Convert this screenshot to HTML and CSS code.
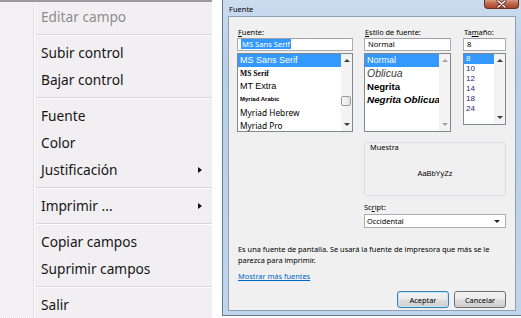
FILE: index.html
```html
<!DOCTYPE html>
<html lang="es">
<head>
    <meta charset="UTF-8">
    <meta name="viewport" content="width=device-width, initial-scale=1.0">
    <title>Fuente</title>
    <link rel="stylesheet" href="styles.css">
</head>
<body>
<div class="screen">
    <ul class="menu">
        <li class="disabled">Editar campo</li>
        <li class="sep"></li>
        <li>Subir control</li>
        <li>Bajar control</li>
        <li class="sep"></li>
        <li>Fuente</li>
        <li>Color</li>
        <li class="sub">Justificación</li>
        <li class="sep"></li>
        <li class="sub">Imprimir ...</li>
        <li class="sep"></li>
        <li>Copiar campos</li>
        <li>Suprimir campos</li>
        <li class="sep"></li>
        <li>Salir</li>
    </ul>

    <div class="dialog">
        <div class="titlebar">
            <span class="title">Fuente</span>
            <span class="close">
                <svg width="11" height="8" viewBox="0 0 11 8">
                    <path d="M2 1 L9 7 M9 1 L2 7" stroke="#5a2418" stroke-width="3" stroke-linecap="round"/>
                    <path d="M2 1 L9 7 M9 1 L2 7" stroke="#fff" stroke-width="1.6" stroke-linecap="round"/>
                </svg>
            </span>
        </div>

        <div class="panel">
            <div class="pickers">
                <div class="picker font">
                    <label><u>F</u>uente:</label>
                    <div class="field"><span class="sel">MS Sans Serif</span></div>
                    <div class="listbox">
                        <ul class="items">
                            <li class="on f-sans">MS Sans Serif</li>
                            <li class="f-serif">MS Serif</li>
                            <li class="f-sans">MT Extra</li>
                            <li class="f-arabic">Myriad Arabic</li>
                            <li class="f-myriad">Myriad Hebrew</li>
                            <li class="f-myriad">Myriad Pro</li>
                        </ul>
                        <div class="scroll">
                            <span class="arrow up"></span>
                            <span class="track"><span class="thumb"></span></span>
                            <span class="arrow down"></span>
                        </div>
                    </div>
                </div>

                <div class="picker style">
                    <label><u>E</u>stilo de fuente:</label>
                    <div class="field">Normal</div>
                    <div class="listbox">
                        <ul class="items">
                            <li class="on s-normal">Normal</li>
                            <li class="s-italic">Oblicua</li>
                            <li class="s-bold">Negrita</li>
                            <li class="s-bolditalic">Negrita Oblicua</li>
                        </ul>
                        <div class="scroll off">
                            <span class="arrow up"></span>
                            <span class="track"></span>
                            <span class="arrow down"></span>
                        </div>
                    </div>
                </div>

                <div class="picker size">
                    <label>Ta<u>m</u>año:</label>
                    <div class="field">8</div>
                    <div class="listbox">
                        <ul class="items">
                            <li class="on">8</li>
                            <li>10</li>
                            <li>12</li>
                            <li>14</li>
                            <li>18</li>
                            <li>24</li>
                        </ul>
                        <div class="scroll">
                            <span class="arrow up"></span>
                            <span class="track"></span>
                            <span class="arrow down"></span>
                        </div>
                    </div>
                </div>
            </div>

            <div class="extras">
                <div class="sample">
                    <span class="sample-label">Muestra</span>
                    <span class="sample-text">AaBbYyZz</span>
                </div>
                <label class="script-label">Sc<u>r</u>ipt:</label>
                <div class="combo">
                    <span>Occidental</span>
                    <span class="combo-arrow"></span>
                </div>
            </div>

            <p class="note">Es una fuente de pantalla. Se usará la fuente de impresora que más se le<br>parezca para imprimir.</p>
            <a class="more" href="#">Mostrar más fuentes</a>

            <div class="buttons">
                <button class="btn default">Aceptar</button>
                <button class="btn">Cancelar</button>
            </div>
        </div>
    </div>
</div>
</body>
</html>
```

FILE: styles.css
```css
* {
    box-sizing: border-box;
}
body {
    margin: 0;
    background: #fff;
}
.screen {
    display: flex;
    width: 521px;
    height: 318px;
    overflow: hidden;
}

/* menú contextual */
.menu {
    flex: none;
    width: 212px;
    height: 318px;
    margin: 0;
    padding: 1px 0 0;
    list-style: none;
    border-top: 2px solid #9b9b9b;
    background:
        linear-gradient(to right, transparent 33px, #e4e1e4 33px, #e4e1e4 34px, #fbfafb 34px, #fbfafb 35px, #f2eff2 35px),
        repeating-conic-gradient(#f9f8f9 0 25%, #ebe9eb 0 50%) 0 0 / 2px 2px;
    font: 13.7px "Noto Sans", sans-serif;
    color: #161616;
}
.menu li {
    display: flex;
    align-items: center;
    height: 27px;
    padding-left: 41px;
}
.menu .disabled {
    color: #8e8c8e;
}
.menu .sub::after {
    content: "";
    margin-left: auto;
    margin-right: 10px;
    border-left: 4px solid #111;
    border-top: 3.5px solid transparent;
    border-bottom: 3.5px solid transparent;
}
.menu .sep {
    display: block;
    height: 9px;
    margin-left: 36px;
    padding: 4px 0 0;
}
.menu .sep::before {
    content: "";
    display: block;
    border-top: 1px solid #d9d5d9;
    border-bottom: 1px solid #fdfdfd;
}

/* ventana de fuente */
.dialog {
    flex: none;
    display: flex;
    flex-direction: column;
    width: 300px;
    height: 316px;
    margin-left: 10px;
    padding: 0 5px 4px;
    border: 1px solid #667b93;
    border-top: 0;
    background: linear-gradient(#cadcef, #b9cfe7 60px, #c0d5eb);
    font: 7.4px "Noto Sans", sans-serif;
    color: #000;
}
.titlebar {
    display: flex;
    justify-content: space-between;
    height: 16px;
}
.title {
    padding: 4px 0 0 1px;
    font-size: 7.5px;
}
.close {
    display: flex;
    align-items: center;
    justify-content: center;
    width: 35px;
    height: 9px;
    margin-right: -3px;
    border: 1px solid #6a2c1e;
    border-top: 0;
    border-radius: 0 0 4px 4px;
    background: linear-gradient(#d99a84, #c0664a 45%, #a8452c);
}
.panel {
    flex: 1;
    padding: 9px 9px 0 8px;
    border: 1px solid #8da2b9;
    background: #f0f0f0;
}

.pickers {
    display: flex;
}
.picker label {
    display: block;
    height: 12px;
    padding-left: 1px;
    line-height: 12px;
}
.font {
    width: 116px;
}
.style {
    width: 87px;
    margin-left: 11px;
}
.size {
    width: 43px;
    margin-left: 12px;
}
.field {
    height: 13px;
    padding-left: 3px;
    border: 1px solid #abadb3;
    border-top-color: #9da0a8;
    background: #fff;
    font-size: 7.6px;
    line-height: 11px;
}
.field .sel {
    display: inline-block;
    padding: 0 1px;
    background: #3399ff;
    color: #fff;
    line-height: 10px;
}
.listbox {
    display: flex;
    height: 79px;
    margin-top: 2px;
    border: 1px solid #828790;
    background: #fff;
}
.size .listbox {
    height: 72px;
}
.items {
    flex: 1;
    min-width: 0;
    margin: 0;
    padding: 0;
    list-style: none;
    overflow: hidden;
}
.items li {
    height: 13px;
    padding-left: 2px;
    line-height: 13px;
    white-space: nowrap;
}
.items .on {
    background: #3399ff;
    color: #fff;
}
.f-sans {
    font: 9px "Liberation Sans", sans-serif;
}
.f-serif {
    font: bold 7.6px "Liberation Serif", serif;
}
.f-arabic {
    font: bold 6px "Liberation Sans", sans-serif;
}
.f-myriad {
    font: 8.3px "Noto Sans", sans-serif;
}
.s-normal {
    font: 9px "Liberation Sans", sans-serif;
}
.s-italic {
    font: italic 10.5px "Liberation Sans", sans-serif;
    color: #3a3a3a;
}
.s-bold {
    font: bold 9.6px "Liberation Sans", sans-serif;
}
.s-bolditalic {
    font: italic bold 9.9px "Liberation Sans", sans-serif;
}
.size .items li {
    height: 10px;
    font: 8px/10px "Liberation Sans", sans-serif;
    color: #1d2a72;
}
.size .items .on {
    color: #fff;
}

.scroll {
    flex: none;
    display: flex;
    flex-direction: column;
    width: 11px;
    background: #f3f3f3;
}
.arrow {
    display: flex;
    align-items: center;
    justify-content: center;
    height: 13px;
}
.arrow::before {
    content: "";
    border-left: 3px solid transparent;
    border-right: 3px solid transparent;
}
.arrow.up::before {
    border-bottom: 3px solid #3c3c3c;
}
.arrow.down::before {
    border-top: 3px solid #3c3c3c;
}
.scroll.off .arrow.up::before {
    border-bottom-color: #a3a3a3;
}
.scroll.off .arrow.down::before {
    border-top-color: #a3a3a3;
}
.track {
    flex: 1;
}
.thumb {
    display: block;
    width: 10px;
    height: 10px;
    margin: 29px 0 0 0;
    border: 1px solid #9a9a9a;
    border-radius: 2px;
    background: linear-gradient(to right, #f6f6f6, #e2e2e2);
}

.extras {
    width: 142px;
    margin-left: 127px;
}
.sample {
    display: flex;
    flex-direction: column;
    height: 54px;
    margin-top: 10px;
    padding: 1px 0 0 5px;
    border: 1px solid #dadee3;
    border-radius: 3px;
}
.sample-label {
    line-height: 7px;
}
.sample-text {
    flex: 1;
    display: flex;
    align-items: center;
    justify-content: center;
    padding-right: 5px;
    font: 7.4px "Liberation Sans", sans-serif;
}
.script-label {
    display: block;
    margin-top: 5px;
    line-height: 12px;
}
.combo {
    display: flex;
    align-items: center;
    justify-content: space-between;
    height: 14px;
    margin-top: 1px;
    padding: 0 5px 0 2px;
    border: 1px solid #abadb3;
    background: #fff;
}
.combo-arrow {
    border-top: 3px solid #222;
    border-left: 3px solid transparent;
    border-right: 3px solid transparent;
}

.note {
    margin: 16px 0 0 1px;
    line-height: 11px;
}
.more {
    display: inline-block;
    margin: 5px 0 0 1px;
    color: #0066cc;
    line-height: 11px;
}
.buttons {
    display: flex;
    justify-content: flex-end;
    gap: 5px;
    margin-top: 9px;
}
.btn {
    width: 52px;
    height: 17px;
    padding: 0;
    border: 1px solid #707070;
    border-radius: 3px;
    background: linear-gradient(#f2f2f2, #ebebeb 48%, #dddddd 52%, #cfcfcf);
    font: 7.4px "Noto Sans", sans-serif;
    color: #000;
}
.btn.default {
    border-color: #3c7fb1;
    box-shadow: inset 0 0 0 1px #bde6fd;
}
```
